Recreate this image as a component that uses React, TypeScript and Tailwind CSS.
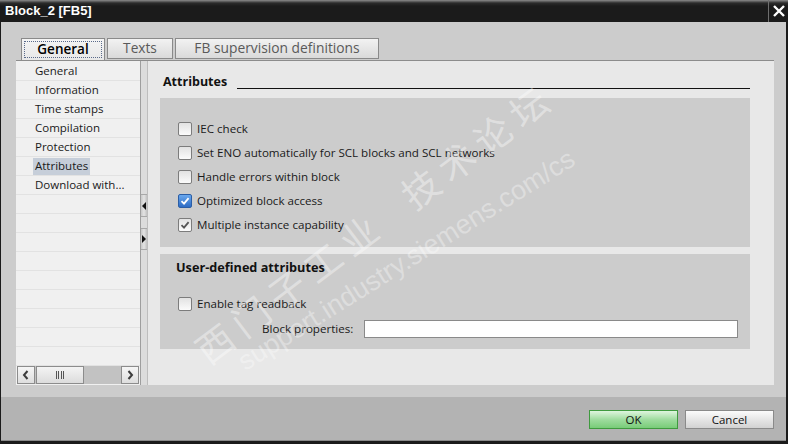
import React from 'react';

const navItems = ['General', 'Information', 'Time stamps', 'Compilation', 'Protection', 'Attributes', 'Download with...'];

function CheckBox({ state }: { state: 'off' | 'blue' | 'gray' }) {
    if (state === 'blue') {
        return (
            <div className="w-[14px] h-[14px] rounded-[2px] border border-[#2b5ea6] bg-linear-to-b from-[#6aa8ee] to-[#2d6bc4] flex items-center justify-center">
                <svg width="10" height="10" viewBox="0 0 10 10">
                    <path d="M1.5 5.2 L4 7.6 L8.6 2.2" fill="none" stroke="#ffffff" strokeWidth="1.8" />
                </svg>
            </div>
        );
    }
    return (
        <div className="w-[14px] h-[14px] rounded-[2px] border border-[#7c7c7c] bg-linear-to-b from-[#e2e2e2] to-[#fbfbfb] flex items-center justify-center">
            {state === 'gray' && (
                <svg width="10" height="10" viewBox="0 0 10 10">
                    <path d="M1.5 5.2 L4 7.6 L8.6 2.2" fill="none" stroke="#555555" strokeWidth="1.8" />
                </svg>
            )}
        </div>
    );
}

function CheckRow({ label, state }: { label: string; state: 'off' | 'blue' | 'gray' }) {
    return (
        <div className="h-[24px] flex items-center">
            <CheckBox state={state} />
            <span className="ml-[5px] text-[11.6px] text-[#1a1a1a]">{label}</span>
        </div>
    );
}

function ScrollBtn({ dir }: { dir: 'l' | 'r' }) {
    return (
        <div className="w-[18px] h-[18px] border border-[#8c8c8c] bg-linear-to-b from-[#f6f6f6] to-[#dedede] flex items-center justify-center">
            <svg width="8" height="10" viewBox="0 0 8 10">
                <path d={dir === 'l' ? 'M5.5 1 L2 5 L5.5 9' : 'M2.5 1 L6 5 L2.5 9'} fill="none" stroke="#3c3c3c" strokeWidth="2" />
            </svg>
        </div>
    );
}

export default function App() {
    return (
        <div className="w-[788px] h-[444px] relative overflow-hidden bg-[#1b1b1b] flex flex-col font-['Open_Sans',sans-serif] select-none">
            {/* title bar */}
            <div className="h-[22px] flex items-stretch bg-[linear-gradient(#8c8c8c,#2c2c2c_3px,#1b1b1b_6px)]">
                <div className="flex-1 pl-[5px] flex items-center text-white font-bold text-[13px] font-['Liberation_Sans',sans-serif]">
                    Block_2 [FB5]
                </div>
                <div className="w-[20px] border-l border-[#6e6e6e] flex items-center justify-center">
                    <svg width="14" height="14" viewBox="0 0 14 14">
                        <path d="M2 2 L12 12 M12 2 L2 12" stroke="#ffffff" strokeWidth="2.4" />
                    </svg>
                </div>
            </div>

            <div className="flex-1 flex flex-col border-l border-r-2 border-b-[3px] border-[#1b1b1b]">
                {/* body */}
                <div className="h-[375px] bg-[#cccccc] pt-[16px] pl-[14px]">
                    {/* tabs */}
                    <div className="h-[22px] pl-[6px] flex gap-[2px]">
                        <div className="w-[84px] h-[22px] border border-b-0 border-[#8a8a8a] bg-linear-to-b from-[#f4f4f4] to-[#e8e8e8] p-[2px]">
                            <div className="h-full border border-dotted border-[#5a6a8a] flex items-center justify-center text-[13.5px] font-semibold text-black">
                                General
                            </div>
                        </div>
                        <div className="w-[66px] h-[21px] border border-[#8a8a8a] bg-linear-to-b from-[#f2f2f2] to-[#dadada] flex items-center justify-center text-[13.7px] text-[#5a5a5a]">
                            Texts
                        </div>
                        <div className="w-[204px] h-[21px] border border-[#8a8a8a] bg-linear-to-b from-[#f2f2f2] to-[#dadada] flex items-center justify-center text-[13.8px] text-[#5a5a5a]">
                            FB supervision definitions
                        </div>
                    </div>

                    {/* panel */}
                    <div className="w-[758px] h-[325px] bg-[#e8e8e8] border-t border-[#8c8c8c] flex ml-[1px]">
                        {/* nav */}
                        <div className="w-[124px] bg-[#f0f0f0] flex flex-col">
                            <div className="flex-1 overflow-hidden pt-[1px]">
                                {Array.from({ length: 16 }).map((_, i) => (
                                    <div key={i} className="h-[19px] border-b border-[#e2e2e2] pl-[17px] flex items-center">
                                        {navItems[i] && (
                                            <span className={`px-[2px] h-[17px] flex items-center text-[11.5px] text-[#1a1a1a] ${navItems[i] === 'Attributes' ? 'bg-[#c6ced9]' : ''}`}>
                                                {navItems[i]}
                                            </span>
                                        )}
                                    </div>
                                ))}
                            </div>
                            <div className="h-[18px] mb-[1px] ml-[1px] mr-[1px] flex bg-[#c2c2c2]">
                                <ScrollBtn dir="l" />
                                <div className="ml-[1px] w-[48px] h-[18px] border border-[#8c8c8c] bg-linear-to-b from-[#f4f4f4] to-[#dcdcdc] flex items-center justify-center gap-[1.5px]">
                                    {[0, 1, 2, 3].map(k => (
                                        <div key={k} className="w-[1px] h-[8px] bg-[#555]" />
                                    ))}
                                </div>
                                <div className="flex-1" />
                                <ScrollBtn dir="r" />
                            </div>
                        </div>

                        {/* splitter */}
                        <div className="w-[8px] border-l border-[#9e9e9e] border-r border-r-[#bdbdbd] bg-[#dcdcdc] flex flex-col pt-[133px]">
                            <div className="h-[23px] bg-linear-to-r from-[#c8c8c8] via-[#e4e4e4] to-[#c0c0c0] border-y border-[#a8a8a8] flex items-center justify-center">
                                <svg width="4" height="8" viewBox="0 0 4 8"><path d="M4 0 L0 4 L4 8 Z" fill="#111" /></svg>
                            </div>
                            <div className="h-[11px]" />
                            <div className="h-[22px] bg-linear-to-r from-[#c8c8c8] via-[#e4e4e4] to-[#c0c0c0] border-y border-[#a8a8a8] flex items-center justify-center">
                                <svg width="4" height="8" viewBox="0 0 4 8"><path d="M0 0 L4 4 L0 8 Z" fill="#111" /></svg>
                            </div>
                        </div>

                        {/* right pane */}
                        <div className="flex-1 pl-[12px] pr-[24px] pt-[13px]">
                            <div className="h-[16px] flex items-end">
                                <span className="ml-[3px] text-[12.5px] font-bold text-[#111] leading-[16px]">Attributes</span>
                                <div className="flex-1 ml-[10px] mb-[1px] h-[1px] bg-[#111]" />
                            </div>

                            <div className="mt-[8px] h-[149px] bg-[#cccccc] pl-[18px] pt-[19px]">
                                <CheckRow label="IEC check" state="off" />
                                <CheckRow label="Set ENO automatically for SCL blocks and SCL networks" state="off" />
                                <CheckRow label="Handle errors within block" state="off" />
                                <CheckRow label="Optimized block access" state="blue" />
                                <CheckRow label="Multiple instance capability" state="gray" />
                            </div>

                            <div className="mt-[7px] h-[95px] bg-[#cccccc] pt-[5px]">
                                <div className="pl-[16px] h-[16px] leading-[16px] text-[12.7px] font-bold text-[#111]">User-defined attributes</div>
                                <div className="mt-[17px] pl-[18px]">
                                    <CheckRow label="Enable tag readback" state="off" />
                                </div>
                                <div className="mt-[4px] flex items-center pl-[102px] pr-[12px]">
                                    <span className="text-[11.6px] text-[#1a1a1a]">Block properties:</span>
                                    <div className="ml-auto w-[374px] h-[18px] bg-white border border-[#8a8a8a]" />
                                </div>
                            </div>
                        </div>
                    </div>
                </div>

                {/* footer */}
                <div className="h-[43px] bg-[#b3b3b3] flex items-start justify-end pt-[13px] pr-[12px] gap-[7px]">
                    <div className="w-[89px] h-[19px] border border-[#3f9a3f] bg-linear-to-b from-[#dff5df] via-[#9fdc9f] to-[#78cc78] flex items-center justify-center text-[11.5px] text-[#111]">
                        OK
                    </div>
                    <div className="w-[89px] h-[19px] border border-[#8a8a8a] bg-linear-to-b from-[#fbfbfb] via-[#e6e6e6] to-[#d2d2d2] flex items-center justify-center text-[11.5px] text-[#111]">
                        Cancel
                    </div>
                </div>
                <div className="h-[1px] bg-[#8a8a8a]" />
            </div>

            {/* watermark */}
            <div className="absolute left-[186px] top-[336px] origin-top-left rotate-[-37deg] whitespace-nowrap text-[37px] leading-[44px] tracking-[8px] text-white/40 font-['Noto_Sans_CJK_SC',sans-serif] pointer-events-none">
                西门子工业&nbsp;&nbsp;技术论坛
            </div>
            <div className="absolute left-[232px] top-[350px] origin-top-left rotate-[-32deg] whitespace-nowrap text-[27px] leading-[32px] text-white/35 font-['Liberation_Sans',sans-serif] pointer-events-none">
                support.industry.siemens.com/cs
            </div>
        </div>
    );
}
